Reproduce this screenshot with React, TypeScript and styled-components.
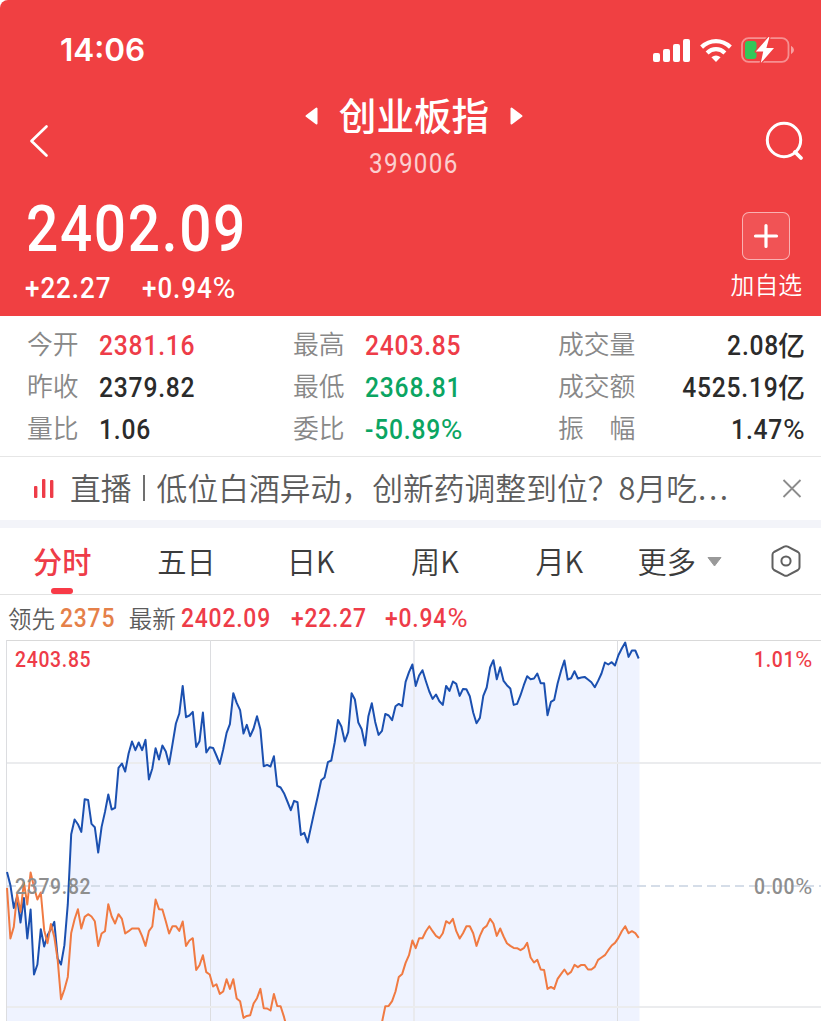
import React from "react";
import styled, { createGlobalStyle } from "styled-components";

const RED = "#f04042";
const UP = "#ee3c48";
const DOWN = "#0ba562";
const CJK = `"Noto Sans CJK SC", sans-serif`;
const DIGITS = `Roboto, "Noto Sans CJK SC", sans-serif`;

const GlobalStyle = createGlobalStyle`
  body { margin: 0; background: #fff; font-family: ${CJK}; overflow: hidden; }
  * { box-sizing: border-box; }
`;

const Page = styled.main`
  width: 821px;
  height: 1021px;
  display: flex;
  flex-direction: column;
  overflow: hidden;
  background: #fff;
`;

/* Figures are set in a condensed cut: Roboto squeezed horizontally, tracked out. */
const Num = styled.span<{
  $size: number;
  $track: number;
  $color?: string;
  $weight?: number;
  $origin?: "left" | "center" | "right";
}>`
  display: inline-block;
  font-family: ${DIGITS};
  font-size: ${(p) => p.$size}px;
  font-weight: ${(p) => p.$weight ?? 500};
  letter-spacing: ${(p) => p.$track}px;
  color: ${(p) => p.$color ?? "inherit"};
  white-space: nowrap;
  transform: scaleX(0.88);
  transform-origin: ${(p) => p.$origin ?? "left"} center;
`;

/* The percent sign keeps its full width beside the condensed digits. */
const Percent = styled.span`
  display: inline-block;
  margin-right: 0.13em;
  font-weight: 400;
  transform: scaleX(1.2);
  transform-origin: left center;
`;

/* ---------- header ---------- */

const Header = styled.header`
  height: 316px;
  flex: none;
  background: ${RED};
  color: #fff;
  border-top-left-radius: 8px;
`;

const StatusBar = styled.div`
  height: 92px;
  padding: 8px 27px 0 60px;
  display: flex;
  align-items: center;
  justify-content: space-between;
`;

const Clock = styled.span`
  font: 600 31.5px/40px Inter, sans-serif;
`;

const StatusIcons = styled.div`
  display: flex;
  align-items: center;
  gap: 9.5px;
  svg { display: block; }
`;

const NavBar = styled.div`
  height: 98px;
  padding: 0 17px 0 29px;
  display: grid;
  grid-template-columns: 40px 1fr 40px;
  align-items: center;
  svg { display: block; }
`;

const SearchButton = styled.div`
  justify-self: end;
`;

const TitleBlock = styled.div`
  height: 98px;
  padding-right: 5px;
  display: flex;
  flex-direction: column;
  align-items: center;
`;

const TitleRow = styled.div`
  display: flex;
  align-items: center;
  gap: 21px;
  height: 48px;
`;

const Title = styled.h1`
  margin: 0;
  padding-bottom: 5px;
  font-size: 37.6px;
  line-height: 43px;
  font-weight: 500;
`;

const Code = styled.div`
  font-family: ${DIGITS};
  font-size: 27.5px;
  line-height: 47px;
  opacity: 0.75;
`;

const Quote = styled.div`
  display: flex;
  justify-content: space-between;
  padding: 0 19px 0 25px;
`;

const Price = styled.div`
  height: 76px;
  padding-left: 1px;
  line-height: 78px;
  font-family: ${DIGITS};
  font-size: 64.5px;
`;

const Changes = styled.div`
  display: flex;
  gap: 19px;
  line-height: 44px;
`;

const Watch = styled.div`
  display: flex;
  flex-direction: column;
  align-items: center;
  padding-top: 22px;
  font-size: 23.8px;
  font-weight: 350;
  line-height: 47px;
`;

const PlusBox = styled.div`
  width: 48px;
  height: 48px;
  border: 1px solid rgba(255, 255, 255, 0.55);
  border-radius: 7px;
  background: rgba(255, 255, 255, 0.1);
  display: grid;
  place-items: center;
`;

/* ---------- key figures ---------- */

const Stats = styled.section`
  height: 141px;
  flex: none;
  padding: 8px 16px 0 27px;
  display: grid;
  grid-template-columns: 266px 265px 1fr;
  grid-auto-rows: 42px;
  border-bottom: 1px solid #e6e6e6;
`;

const Stat = styled.div<{ $spread?: boolean }>`
  display: flex;
  align-items: center;
  height: 42px;
  justify-content: ${(p) => (p.$spread ? "space-between" : "flex-start")};
`;

const StatLabel = styled.span`
  min-width: 71.5px;
  padding-bottom: 4px;
  font-size: 25.8px;
  line-height: 38px;
  font-weight: 350;
  color: #888;
  white-space: pre;
`;

const StatValue = styled.span`
  display: flex;
  align-items: center;
  padding-top: 2px;
  line-height: 40px;
  color: #2b2b2b;
`;

const Unit = styled.span`
  margin-left: -1px;
  padding-bottom: 3px;
  font-size: 27px;
  line-height: 37px;
  font-weight: 500;
`;

/* ---------- live banner ---------- */

const Banner = styled.section`
  height: 63px;
  flex: none;
  display: flex;
  align-items: center;
  padding: 0 19px 0 33px;
  font-size: 30.8px;
  font-weight: 350;
  color: #5c5c5c;
  svg { display: block; }
`;

const BannerText = styled.div`
  flex: 1;
  margin-left: 15px;
  padding-bottom: 3px;
  line-height: 60px;
  white-space: nowrap;
`;

const Divider = styled.span`
  display: inline-block;
  width: 2px;
  height: 26px;
  margin: 0 12px 0 11px;
  vertical-align: -1px;
  background: #707070;
`;

const Ellipsis = styled.span`
  letter-spacing: 2.6px;
  margin-left: 1px;
`;

const Gap = styled.div`
  height: 8px;
  flex: none;
  background: #f3f4f9;
`;

/* ---------- period tabs ---------- */

const Tabs = styled.nav`
  height: 67px;
  flex: none;
  display: flex;
  padding: 0 19px 0 0;
  border-bottom: 1px solid #e2e2e2;
  font-size: 29.2px;
  font-weight: 350;
  color: #3c3c3c;
`;

const Tab = styled.div<{ $active?: boolean }>`
  position: relative;
  width: 124.3px;
  line-height: 64px;
  text-align: center;
  font-weight: ${(p) => (p.$active ? 500 : 350)};
  color: ${(p) => (p.$active ? UP : "inherit")};
  &::after {
    content: "";
    display: ${(p) => (p.$active ? "block" : "none")};
    position: absolute;
    left: 51px;
    bottom: 0;
    width: 22px;
    height: 6px;
    border-radius: 3px;
    background: #f83a47;
  }
`;

const More = styled.div`
  flex: 1;
  display: flex;
  align-items: center;
  gap: 11px;
  padding-left: 16px;
  line-height: 64px;
`;

const MoreLabel = styled.span`
  padding-bottom: 2px;
`;

const Settings = styled.div`
  display: flex;
  align-items: center;
`;

/* ---------- chart ---------- */

const Legend = styled.div`
  height: 45px;
  flex: none;
  display: flex;
  align-items: center;
  padding: 1px 0 0 8px;
  line-height: 42px;
  font-size: 23.5px;
  font-weight: 350;
  color: #5c5c5c;
`;

const LegendItem = styled.span<{ $gap: number }>`
  display: flex;
  align-items: center;
  gap: 5px;
  margin-right: ${(p) => p.$gap}px;
`;

const Chart = styled.section`
  position: relative;
  height: 381px;
  flex: none;
  svg { display: block; }
`;

const AxisLabel = styled.span<{ $side: "left" | "right"; $top: number; $color: string }>`
  position: absolute;
  ${(p) => (p.$side === "left" ? "left: 15px" : "right: 8px")};
  top: ${(p) => p.$top}px;
  font: 500 22px/26px ${DIGITS};
  letter-spacing: 0.8px;
  transform: scaleX(0.88);
  transform-origin: ${(p) => p.$side} center;
  color: ${(p) => p.$color};
`;

const CHART_TOP = 640;
const STEP = 3.378;
const LEFT = 7;

const indexLine = [
  871.7, 885, 907.7, 896.7, 922.3, 897.7, 938.3, 909.3, 974.3, 964.3, 929, 946.3, 935, 929, 921.7, 958.3, 964.3, 945,
  904, 834, 819.3, 824, 831.7, 799, 799.7, 823.7, 827, 852.3, 826.7, 811.7, 794.3, 809.3, 807.7, 767.7, 763.3, 771.3,
  753.3, 741.3, 750, 742.3, 750, 739.7, 779.3, 768.3, 748, 759.3, 745.3, 751.3, 764, 744, 723.3, 713.3, 685.7, 717,
  715.3, 711.7, 746.7, 741, 712.3, 752.3, 747, 747.7, 755.3, 763.7, 749.3, 732.7, 724, 693, 702.7, 710, 733.3, 724.7,
  736, 728.3, 716, 729, 766, 764.7, 766.3, 756, 785.7, 787.3, 793, 801.3, 810, 800.7, 802, 834.7, 832.7, 842.3, 826.7,
  811, 796, 780, 777.3, 762, 760.3, 742.3, 719.7, 726.3, 741.3, 732, 693, 699.3, 722.3, 729, 745.3, 716, 703, 721.7,
  734.7, 730.7, 713.7, 715.3, 720, 706, 703.7, 706, 681.7, 672, 664.3, 685.7, 675.3, 670, 681, 691.3, 698.7, 694.3,
  701, 704.7, 685.7, 690.7, 681.3, 683.7, 695.7, 688.7, 689, 696, 712.3, 723, 717.7, 695.7, 687.3, 667.3, 660, 679,
  667, 680.7, 685, 688.3, 704.7, 703.7, 695, 685, 676, 679, 678.3, 673.3, 683, 683, 715, 701.7, 699.7, 683.3, 670.7,
  660.3, 679.3, 678, 671, 678.3, 677.3, 676.7, 679.3, 682, 687, 680.7, 673.3, 662.3, 664.3, 662, 665.3, 655, 648.3,
  642.3, 656.7, 650.3, 650.3, 658.3,
];

const leadLine = [
  887.7, 938.3, 926.7, 894, 911.7, 882.3, 904.3, 872.3, 886.7, 899.3, 892.3, 930, 943, 923.7, 936.7, 960, 999, 989.3,
  976.7, 932.7, 919, 909, 928.3, 916.7, 914, 916.3, 921, 945.7, 933.3, 931, 904, 916.3, 923.3, 914, 918.7, 933.3, 931,
  928.3, 928.3, 928.3, 936, 945.7, 931, 926.3, 899.3, 909, 909.3, 921, 933.3, 926, 926, 930.7, 921.3, 945.7, 940.3,
  938, 969.7, 965, 955, 972, 974.3, 986.3, 984, 993.7, 991.3, 979, 988.7, 979, 998.3, 1001, 1017.7, 1015.7, 1015,
  1003.3, 998, 988.7, 1008, 1008.3, 1010.3, 993.7, 1005.7, 1006, 1016.7, 1030, 1040, 1046, 1052, 1058, 1060, 1064,
  1066, 1068, 1070, 1070, 1070, 1070, 1070, 1070, 1070, 1068, 1066, 1064, 1062, 1060, 1058, 1054, 1050, 1046, 1042,
  1038, 1032, 1022, 1006, 1005.7, 1001, 991.3, 976.7, 973.7, 962.7, 955, 940.3, 948, 938, 938, 931, 926, 931, 935.7,
  938, 933, 921, 923.3, 918.7, 931, 938.3, 933, 926, 926, 933, 945.7, 935.7, 928.3, 925.7, 918.7, 923.3, 935.7, 928.3,
  936.3, 943, 945.7, 947.7, 948, 950, 948, 942.7, 957.3, 962.3, 959.7, 969.3, 969.7, 988.7, 986.7, 988.7, 978.7, 974,
  969.3, 974.3, 971.7, 964.7, 967, 964.7, 964.7, 969.3, 969.3, 966.7, 959.7, 957.3, 955, 950, 945.3, 942.7, 937.7,
  931, 926, 933, 931, 933, 937.7,
];

const toPoints = (values: number[]) =>
  values.map((y, i) => `${(LEFT + i * STEP).toFixed(1)},${(y - CHART_TOP + 0.2).toFixed(1)}`).join(" ");

const figure = (text: string) =>
  text.endsWith("%") ? (
    <>
      {text.slice(0, -1)}
      <Percent>%</Percent>
    </>
  ) : (
    text
  );

const stats: { label: string; value: string; unit?: string; color?: string }[] = [
  { label: "今开", value: "2381.16", color: UP },
  { label: "最高", value: "2403.85", color: UP },
  { label: "成交量", value: "2.08", unit: "亿" },
  { label: "昨收", value: "2379.82" },
  { label: "最低", value: "2368.81", color: DOWN },
  { label: "成交额", value: "4525.19", unit: "亿" },
  { label: "量比", value: "1.06" },
  { label: "委比", value: "-50.89%", color: DOWN },
  { label: "振\u3000幅", value: "1.47%" },
];

const Signal = () => (
  <svg width="37" height="23" viewBox="0 0 37 23" fill="#fff">
    <rect x="0" y="14" width="7" height="9" rx="2" />
    <rect x="10" y="10" width="7" height="13" rx="2" />
    <rect x="20" y="5" width="7" height="18" rx="2" />
    <rect x="30" y="0" width="7" height="23" rx="2" />
  </svg>
);

const Wifi = () => (
  <svg width="32" height="23" viewBox="0 0 32 23">
    <g fill="none" stroke="#fff" strokeWidth="4.2">
      <path d="M1.6 8.1 Q8 2.1 16 2.1 T30.4 8.1" />
      <path d="M7.1 13.9 Q11 10.2 16 10.2 T24.9 13.9" />
    </g>
    <path d="M11.4 18.3 Q16 14.8 20.6 18.3 L16 23 Z" fill="#fff" />
  </svg>
);

const Battery = () => (
  <svg width="53" height="26" viewBox="0 0 53 26">
    <rect x="1" y="1.2" width="46.5" height="23.6" rx="6.5" fill="none" stroke="#fff" strokeOpacity="0.42" strokeWidth="1.8" />
    <path d="M50 8.8 Q53 10.5 53 13 T50 17.2 Z" fill="#fff" fillOpacity="0.5" />
    <rect x="4" y="4" width="11.5" height="18" rx="3" fill="#34c759" />
    <path
      d="M27.5 0 L14.8 14.6 H22.2 L19.8 26 L33 11 H25.4 L28.4 0.2 Z"
      fill="#fff"
      stroke={RED}
      strokeWidth="2.4"
      strokeLinejoin="round"
      paintOrder="stroke"
    />
  </svg>
);

export default function App() {
  const indexPoints = toPoints(indexLine);
  return (
    <>
      <GlobalStyle />
      <Page>
        <Header>
          <StatusBar>
            <Clock>14:06</Clock>
            <StatusIcons>
              <Signal />
              <Wifi />
              <Battery />
            </StatusIcons>
          </StatusBar>
          <NavBar>
            <svg width="20" height="34" viewBox="0 0 20 34" fill="none" stroke="#fff" strokeWidth="2.7" strokeLinecap="round" strokeLinejoin="round">
              <path d="M17.5 2.5 L2.5 17 L17.5 31.5" />
            </svg>
            <TitleBlock>
              <TitleRow>
                <svg width="13" height="18" viewBox="0 0 13 18" fill="#fff" stroke="#fff" strokeWidth="2" strokeLinejoin="round">
                  <path d="M1.5 9 L11.5 1.5 V16.5 Z" />
                </svg>
                <Title>创业板指</Title>
                <svg width="13" height="18" viewBox="0 0 13 18" fill="#fff" stroke="#fff" strokeWidth="2" strokeLinejoin="round">
                  <path d="M11.5 9 L1.5 1.5 V16.5 Z" />
                </svg>
              </TitleRow>
              <Code>
                <Num $size={27.5} $track={1.5} $weight={400} $origin="center">399006</Num>
              </Code>
            </TitleBlock>
            <SearchButton>
              <svg width="39" height="40" viewBox="0 0 39 40" fill="none" stroke="#fff" strokeWidth="3">
                <circle cx="19" cy="19" r="16.7" />
                <path d="M30 31 L36 37" strokeWidth="3.8" strokeLinecap="round" />
              </svg>
            </SearchButton>
          </NavBar>
          <Quote>
            <div>
              <Price>
                <Num $size={64.5} $track={1.9}>2402.09</Num>
              </Price>
              <Changes>
                <Num $size={29.5} $track={1.1}>+22.27</Num>
                <Num $size={29.5} $track={1.1}>{figure("+0.94%")}</Num>
              </Changes>
            </div>
            <Watch>
              <PlusBox>
                <svg width="26" height="26" viewBox="0 0 26 26" stroke="#fff" strokeWidth="3.2" strokeLinecap="round">
                  <path d="M13 2.5 V23.5 M2.5 13 H23.5" />
                </svg>
              </PlusBox>
              加自选
            </Watch>
          </Quote>
        </Header>

        <Stats>
          {stats.map((s, i) => (
            <Stat key={s.label} $spread={i % 3 === 2}>
              <StatLabel>{s.label}</StatLabel>
              <StatValue>
                <Num $size={28} $track={0.9} $color={s.color} $origin={i % 3 === 2 ? "right" : "left"}>
                  {figure(s.value)}
                </Num>
                {s.unit && <Unit>{s.unit}</Unit>}
              </StatValue>
            </Stat>
          ))}
        </Stats>

        <Banner>
          <svg width="22" height="20" viewBox="0 0 22 20" fill={UP}>
            <rect x="1" y="7" width="3.4" height="12" rx="1" />
            <rect x="9" y="0" width="3.4" height="19" rx="1" />
            <rect x="17" y="1" width="3.4" height="18" rx="1" />
          </svg>
          <BannerText>
            直播<Divider />低位白酒异动，创新药调整到位？8月吃<Ellipsis>...</Ellipsis>
          </BannerText>
          <svg width="20" height="20" viewBox="0 0 20 20" stroke="#8c8c8c" strokeWidth="1.8">
            <path d="M1.5 1 L18.5 18 M18.5 1 L1.5 18" />
          </svg>
        </Banner>

        <Gap />

        <Tabs>
          <Tab $active>分时</Tab>
          <Tab>五日</Tab>
          <Tab>日K</Tab>
          <Tab>周K</Tab>
          <Tab>月K</Tab>
          <More>
            <MoreLabel>更多</MoreLabel>
            <svg width="15" height="11" viewBox="0 0 15 11" fill="#999" stroke="#999" strokeLinejoin="round">
              <path d="M1 1.5 H14 L7.5 10 Z" />
            </svg>
          </More>
          <Settings>
            <svg width="32" height="34" viewBox="0 0 32 34" fill="none" stroke="#606060" strokeWidth="2" strokeLinejoin="round">
              <path d="M14.2 2.6 Q16 1.7 17.8 2.6 L28 8 Q29.5 8.9 29.5 10.7 V23.3 Q29.5 25.1 28 26 L17.8 31.4 Q16 32.3 14.2 31.4 L4 26 Q2.5 25.1 2.5 23.3 V10.7 Q2.5 8.9 4 8 Z" />
              <circle cx="16" cy="17" r="4.6" />
            </svg>
          </Settings>
        </Tabs>

        <Legend>
          <LegendItem $gap={6}>
            领先<Num $size={26} $track={0.9} $color="#e58049">2375</Num>
          </LegendItem>
          <LegendItem $gap={8}>
            最新<Num $size={26} $track={0.9} $color={UP}>2402.09</Num>
          </LegendItem>
          <LegendItem $gap={8}>
            <Num $size={26} $track={0.9} $color={UP}>+22.27</Num>
          </LegendItem>
          <LegendItem $gap={0}>
            <Num $size={26} $track={0.9} $color={UP}>{figure("+0.94%")}</Num>
          </LegendItem>
        </Legend>

        <Chart>
          <svg width="821" height="381" viewBox="0 0 821 381">
            <polygon points={`${LEFT},381 ${indexPoints} 639.5,19 639.5,381`} fill="#eff3ff" />
            <path d="M6 0.5 H821" stroke="#d9d9d9" />
            <path d="M6.5 0 V381 M210.5 0 V381 M617.5 0 V381" stroke="#dcdde0" />
            <path d="M414 0 V381" stroke="#e9eaee" strokeWidth="2" />
            <path d="M7 123 H821 M7 367 H821" stroke="#ebecee" strokeWidth="2" />
            <path d="M7 246 H821" stroke="#d5dde8" strokeWidth="2" strokeDasharray="9 5" />
            <g fill="none" strokeWidth="2" strokeLinejoin="round">
              <polyline points={indexPoints} stroke="#1b50b0" />
              <polyline points={toPoints(leadLine)} stroke="#f07a42" />
            </g>
          </svg>
          <AxisLabel $side="left" $top={7} $color={UP}>2403.85</AxisLabel>
          <AxisLabel $side="right" $top={7} $color={UP}>{figure("1.01%")}</AxisLabel>
          <AxisLabel $side="left" $top={234} $color="#8e8e8e">2379.82</AxisLabel>
          <AxisLabel $side="right" $top={234} $color="#8e8e8e">{figure("0.00%")}</AxisLabel>
        </Chart>
      </Page>
    </>
  );
}
